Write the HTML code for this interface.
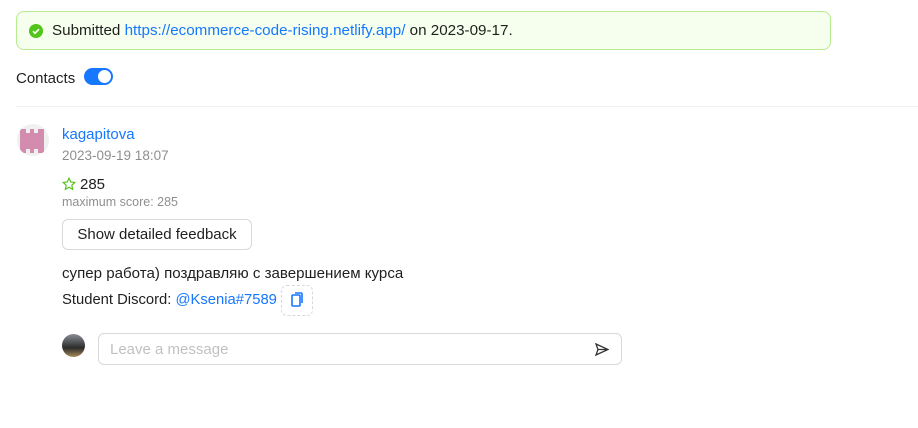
<!DOCTYPE html>
<html><head><style>
body{margin:0;width:918px;height:428px;background:#fff;font-family:"Liberation Sans",sans-serif;font-size:15px;color:rgba(0,0,0,.88);position:relative;overflow:hidden}
.a{position:absolute}
a{color:#1677ff;text-decoration:none}
</style></head><body>
<div class="a" style="left:16px;top:11px;width:815px;height:39px;box-sizing:border-box;background:#f6ffed;border:1px solid #b7eb8f;border-radius:8px"></div>
<svg class="a" style="left:29px;top:24px" width="14" height="14" viewBox="0 0 14 14"><circle cx="7" cy="7" r="7" fill="#52c41a"/><path d="M4 7.2l2 2 4-4" stroke="#fff" stroke-width="1.6" fill="none"/></svg>
<div class="a" style="left:52px;top:22px;font-size:15.2px">Submitted <a>https://ecommerce-code-rising.netlify.app/</a> on 2023-09-17.</div>
<div class="a" style="left:16px;top:70px">Contacts</div>
<div class="a" style="left:84px;top:68px;width:29px;height:17px;border-radius:9px;background:#1677ff"><div class="a" style="left:14px;top:2px;width:13px;height:13px;border-radius:50%;background:#fff"></div></div>
<div class="a" style="left:16px;top:106px;width:902px;height:1px;background:#f0f0f0"></div>
<div class="a" style="left:17px;top:124px;width:32px;height:32px;border-radius:50%;background:#f0f0f0;overflow:hidden">
<div class="a" style="left:3px;top:5px;width:24px;height:24px;background:#d38cae"></div>
<div class="a" style="left:9px;top:5px;width:4px;height:4px;background:#f0f0f0"></div><div class="a" style="left:17px;top:5px;width:4px;height:4px;background:#f0f0f0"></div>
<div class="a" style="left:9px;top:25px;width:4px;height:4px;background:#f0f0f0"></div><div class="a" style="left:17px;top:25px;width:4px;height:4px;background:#f0f0f0"></div>
</div>
<div class="a" style="left:62px;top:126px"><a>kagapitova</a></div>
<div class="a" style="left:62px;top:148px;font-size:13.5px;color:rgba(0,0,0,.45)">2023-09-19 18:07</div>
<svg class="a" style="left:62px;top:177px" width="14" height="14" viewBox="0 0 24 24"><path d="M12 2l3 6.5 7 .8-5.2 4.8 1.5 7L12 17.6 5.7 21.1l1.5-7L2 9.3l7-.8z" fill="none" stroke="#52c41a" stroke-width="2"/></svg>
<div class="a" style="left:80px;top:176px">285</div>
<div class="a" style="left:62px;top:195px;font-size:12.5px;color:rgba(0,0,0,.45)">maximum score: 285</div>
<div class="a" style="left:62px;top:219px;width:190px;height:31px;box-sizing:border-box;border:1px solid #d9d9d9;border-radius:6px;text-align:center;line-height:29px">Show detailed feedback</div>
<div class="a" style="left:62px;top:265px;font-size:15.1px">супер работа) поздравляю с завершением курса</div>
<div class="a" style="left:62px;top:292px;font-size:14.8px">Student Discord: <a>@Ksenia#7589</a></div>
<div class="a" style="left:281px;top:285px;width:32px;height:31px;box-sizing:border-box;border:1px dashed #d9d9d9;border-radius:6px"></div>
<svg class="a" style="left:291px;top:292px" width="12" height="15" viewBox="0 0 12 15"><rect x="1" y="3" width="8" height="11" rx="1" fill="none" stroke="#1677ff" stroke-width="1.6"/><path d="M4 1h6a1 1 0 0 1 1 1v9" fill="none" stroke="#1677ff" stroke-width="1.6"/></svg>
<div class="a" style="left:62px;top:334px;width:23px;height:23px;border-radius:50%;background:linear-gradient(#8a8f96,#2b2b2b 60%,#a88a5a)"></div>
<div class="a" style="left:98px;top:333px;width:524px;height:32px;box-sizing:border-box;border:1px solid #d9d9d9;border-radius:6px"></div>
<div class="a" style="left:110px;top:341px;color:rgba(0,0,0,.25)">Leave a message</div>
<svg class="a" style="left:595px;top:343px" width="14" height="13" viewBox="0 0 14 13"><path d="M1 1l12 5.5L1 12l2-5.5z M3 6.5h10" fill="none" stroke="#333" stroke-width="1.3"/></svg>
</body></html>
